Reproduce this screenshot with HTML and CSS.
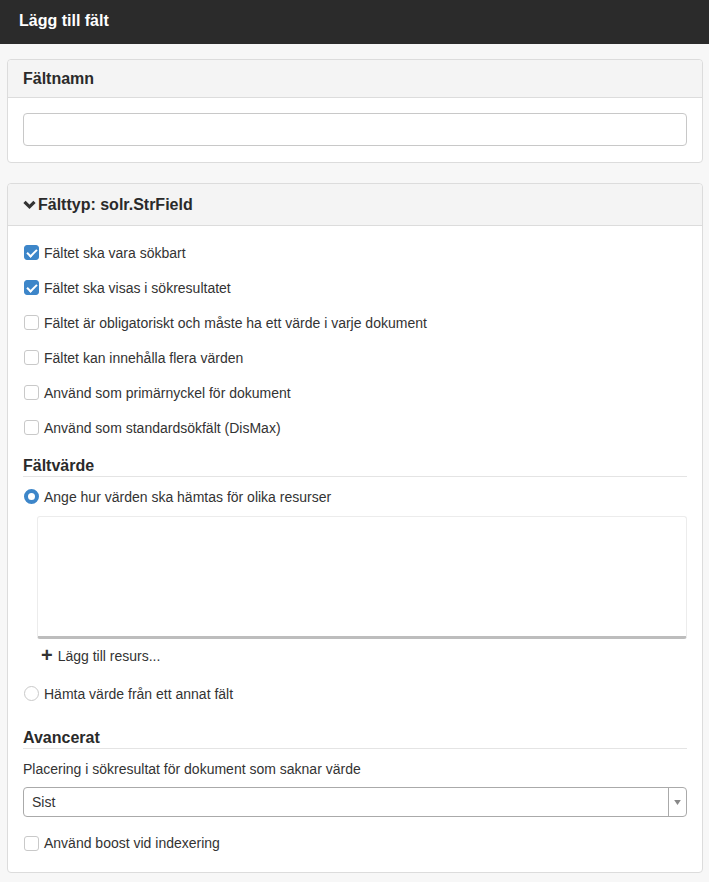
FILE: index.html
```html
<!DOCTYPE html>
<html lang="sv">
<head>
<meta charset="utf-8">
<title>Lägg till fält</title>
<link rel="stylesheet" href="styles.css">
</head>
<body>
<header class="topbar">Lägg till fält</header>
<main class="content">
  <section class="panel">
    <div class="panel-head">Fältnamn</div>
    <div class="panel-body name-body">
      <input class="text-input" type="text">
    </div>
  </section>

  <section class="panel">
    <div class="panel-head">
      <svg class="chevron" viewBox="0 0 13 10" width="13" height="10"><path d="M1.5 1.8 L6.5 6.8 L11.5 1.8" fill="none" stroke="#333" stroke-width="3.2"/></svg>
      Fälttyp: solr.StrField
    </div>
    <div class="panel-body">
      <label class="check-row"><span class="box checked"></span>Fältet ska vara sökbart</label>
      <label class="check-row"><span class="box checked"></span>Fältet ska visas i sökresultatet</label>
      <label class="check-row"><span class="box"></span>Fältet är obligatoriskt och måste ha ett värde i varje dokument</label>
      <label class="check-row"><span class="box"></span>Fältet kan innehålla flera värden</label>
      <label class="check-row"><span class="box"></span>Använd som primärnyckel för dokument</label>
      <label class="check-row"><span class="box"></span>Använd som standardsökfält (DisMax)</label>

      <h3 class="section-title value-title">Fältvärde</h3>
      <label class="check-row radio-row"><span class="radio on"></span>Ange hur värden ska hämtas för olika resurser</label>
      <div class="resource-box"></div>
      <div class="add-link"><span class="plus">+</span>Lägg till resurs...</div>
      <label class="check-row radio-row other"><span class="radio"></span>Hämta värde från ett annat fält</label>

      <h3 class="section-title adv-title">Avancerat</h3>
      <div class="field-label">Placering i sökresultat för dokument som saknar värde</div>
      <div class="select">
        <span class="select-value">Sist</span>
        <span class="select-arrow"><svg viewBox="0 0 8 6" width="7" height="5"><path d="M0 0 H8 L4 6 Z" fill="#888"/></svg></span>
      </div>
      <label class="check-row boost"><span class="box"></span>Använd boost vid indexering</label>
    </div>
  </section>
</main>
</body>
</html>
```
FILE: styles.css
```css
* { box-sizing: border-box; }

body {
  margin: 0;
  background: #f7f7f7;
  font-family: "Liberation Sans", Arial, sans-serif;
  font-size: 14px;
  color: #333;
}

.topbar {
  height: 44px;
  background: #2b2b2b;
  color: #fff;
  font-weight: bold;
  font-size: 16px;
  padding: 12px 0 0 19px;
}

.content {
  padding: 15px 6px 10px 7px;
  display: flex;
  flex-direction: column;
  gap: 20px;
}

.panel {
  background: #fff;
  border: 1px solid #dcdcdc;
  border-radius: 4px;
}

.panel-head {
  background: #f4f4f4;
  border-bottom: 1px solid #dcdcdc;
  border-radius: 4px 4px 0 0;
  height: 38px;
  padding: 10px 15px 0;
  font-weight: bold;
  font-size: 16px;
  color: #2a2a2a;
  display: flex;
  align-items: flex-start;
}

.panel + .panel .panel-head {
  height: 42px;
  padding-top: 12px;
}

.chevron {
  margin: 4px 2px 0 0;
  flex: none;
}

.panel-body {
  padding: 15px 15px 11px;
}

.name-body {
  padding: 15px 15px 16px;
}

.text-input {
  display: block;
  width: 100%;
  height: 33px;
  border: 1px solid #c8c8c8;
  border-radius: 4px;
  background: #fff;
}

.check-row {
  display: flex;
  align-items: center;
  height: 35px;
  color: #333;
  white-space: nowrap;
}

.panel-body > .check-row:first-child { margin-top: -6px; }

.box {
  width: 15px;
  height: 15px;
  border: 1px solid #c9c9c9;
  border-radius: 3px;
  background: #fff;
  margin: 0 5px 0 1px;
  flex: none;
  position: relative;
}

.box.checked {
  background: #3d86c9;
  border-color: #3d86c9;
}

.box.checked::after {
  content: "";
  position: absolute;
  left: 4px;
  top: 1px;
  width: 4px;
  height: 8px;
  border: solid #fff;
  border-width: 0 2.5px 2.5px 0;
  transform: rotate(45deg);
}

.radio {
  width: 15px;
  height: 15px;
  border: 1px solid #c9c9c9;
  border-radius: 50%;
  background: #fff;
  margin: 0 5px 0 1px;
  flex: none;
}

.radio.on {
  border: 4px solid #3d86c9;
}

.section-title {
  margin: 12px 0 0;
  font-size: 16px;
  line-height: 18px;
  font-weight: bold;
  color: #2a2a2a;
  padding-bottom: 1px;
  border-bottom: 1px solid #e4e4e4;
}

.radio-row { height: 39px; }

.resource-box {
  margin: 0 0 0 14px;
  height: 123px;
  border: 1px solid #ececec;
  border-bottom: 3px solid #bdbdbd;
  border-radius: 3px;
}

.add-link {
  display: flex;
  align-items: center;
  height: 33px;
  padding-left: 18px;
  color: #333;
}

.plus {
  font-size: 20px;
  font-weight: bold;
  margin-right: 5px;
  line-height: 1;
  position: relative;
  top: -1px;
}

.radio-row.other { height: 43px; margin-top: 0; }

.adv-title { margin-top: 14px; }

.field-label {
  margin-top: 12px;
  height: 20px;
}

.select {
  margin-top: 6px;
  height: 30px;
  border: 1px solid #aaa;
  border-radius: 4px;
  display: flex;
  align-items: center;
}

.select-value {
  flex: 1;
  padding-left: 8px;
}

.select-arrow {
  width: 18px;
  height: 100%;
  border-left: 1px solid #aaa;
  display: flex;
  align-items: center;
  justify-content: center;
}

.check-row.boost {
  margin-top: 8px;
  height: 36px;
}
```
